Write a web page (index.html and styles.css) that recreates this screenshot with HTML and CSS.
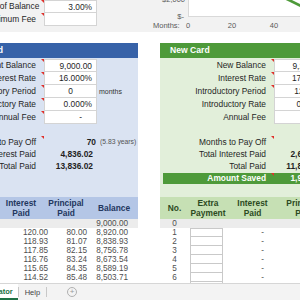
FILE: index.html
```html
<!DOCTYPE html>
<html lang="en">
<head>
    <meta charset="UTF-8">
    <title>Balance Transfer Calculator</title>
    <link rel="stylesheet" href="styles.css">
</head>
<body>
<div class="sheet">
    <div class="sheet__inner">
        <div class="top">
            <div class="fee">
                <div class="row">
                    <span class="label note">Transfer Fee % of Balance</span>
                    <span class="cell cell--first">3.00%</span>
                </div>
                <div class="row">
                    <span class="label note">Minimum Fee</span>
                    <span class="cell"></span>
                </div>
            </div>
            <svg class="chart" width="150" height="32" viewBox="0 0 150 32">
                <rect x="38.5" y="-10" width="130" height="26.5" fill="#fff" stroke="#d9d9d9"/>
                <polyline points="128,-5 141,1 153,7" fill="none" stroke="#4e9a3a" stroke-width="2.6"/>
                <text x="35" y="2" text-anchor="end">$2,000</text>
                <text x="34" y="19" text-anchor="end">$-</text>
                <text x="3" y="28">Months:</text>
                <text x="38" y="28" text-anchor="middle">0</text>
                <text x="82" y="28" text-anchor="middle">20</text>
                <text x="124" y="28" text-anchor="middle">40</text>
            </svg>
        </div>

        <div class="panels">
            <section class="panel panel--current">
                <div class="panel__head">Current Card</div>
                <div class="panel__body">
                    <div class="row">
                        <span class="label note">Current Balance</span>
                        <span class="cell cell--first">9,000.00</span>
                    </div>
                    <div class="row">
                        <span class="label note">Interest Rate</span>
                        <span class="cell">16.000%</span>
                    </div>
                    <div class="row">
                        <span class="label note">Introductory Period</span>
                        <span class="cell cell--center">0</span>
                        <span class="unit">months</span>
                    </div>
                    <div class="row">
                        <span class="label note">Introductory Rate</span>
                        <span class="cell">0.000%</span>
                    </div>
                    <div class="row">
                        <span class="label note">Annual Fee</span>
                        <span class="cell cell--dash">-</span>
                    </div>

                    <div class="results">
                        <div class="row">
                            <span class="label note">Months to Pay Off</span>
                            <span class="value value--count">70</span>
                            <span class="years">(5.83 years)</span>
                        </div>
                        <div class="row">
                            <span class="label">Total Interest Paid</span>
                            <span class="value">4,836.02</span>
                        </div>
                        <div class="row">
                            <span class="label">Total Paid</span>
                            <span class="value">13,836.02</span>
                        </div>
                    </div>
                </div>

                <div class="grid grid--current">
                    <div class="th">Payment</div>
                    <div class="th">Interest<br>Paid</div>
                    <div class="th th--principal">Principal<br>Paid</div>
                    <div class="th">Balance</div>

                    <div class="td zero"></div><div class="td zero"></div><div class="td zero"></div><div class="td zero td--bal">9,000.00</div>

                    <div class="td">200.00</div><div class="td td--int">120.00</div><div class="td td--prin">80.00</div><div class="td td--bal">8,920.00</div>
                    <div class="td">200.00</div><div class="td td--int">118.93</div><div class="td td--prin">81.07</div><div class="td td--bal">8,838.93</div>
                    <div class="td">200.00</div><div class="td td--int">117.85</div><div class="td td--prin">82.15</div><div class="td td--bal">8,756.78</div>
                    <div class="td">200.00</div><div class="td td--int">116.76</div><div class="td td--prin">83.24</div><div class="td td--bal">8,673.54</div>
                    <div class="td">200.00</div><div class="td td--int">115.65</div><div class="td td--prin">84.35</div><div class="td td--bal">8,589.19</div>
                    <div class="td">200.00</div><div class="td td--int">114.52</div><div class="td td--prin">85.48</div><div class="td td--bal">8,503.71</div>
                    <div class="td">200.00</div><div class="td td--int">113.38</div><div class="td td--prin">86.62</div><div class="td td--bal">8,417.09</div>
                </div>
            </section>

            <section class="panel panel--new">
                <div class="panel__head">New Card</div>
                <div class="panel__body">
                    <div class="row">
                        <span class="label note">New Balance</span>
                        <span class="cell cell--first">9,270.00</span>
                    </div>
                    <div class="row">
                        <span class="label note">Interest Rate</span>
                        <span class="cell">17.000%</span>
                    </div>
                    <div class="row">
                        <span class="label note">Introductory Period</span>
                        <span class="cell cell--center">12</span>
                    </div>
                    <div class="row">
                        <span class="label">Introductory Rate</span>
                        <span class="cell">0.000%</span>
                    </div>
                    <div class="row">
                        <span class="label">Annual Fee</span>
                        <span class="cell cell--dash">-</span>
                    </div>

                    <div class="results">
                        <div class="row">
                            <span class="label note">Months to Pay Off</span>
                            <span class="value value--count">62</span>
                        </div>
                        <div class="row">
                            <span class="label">Total Interest Paid</span>
                            <span class="value">2,617.85</span>
                        </div>
                        <div class="row">
                            <span class="label">Total Paid</span>
                            <span class="value">11,887.85</span>
                        </div>
                        <div class="row row--saved">
                            <span class="label note">Amount Saved</span>
                            <span class="value">1,948.17</span>
                        </div>
                    </div>
                </div>

                <div class="grid grid--new">
                    <div class="th">No.</div>
                    <div class="th">Extra<br>Payment</div>
                    <div class="th">Interest<br>Paid</div>
                    <div class="th">Principal<br>Paid</div>
                    <div class="th">Balance</div>

                    <div class="td zero td--no">0</div><div class="td zero"></div><div class="td zero"></div><div class="td zero"></div><div class="td zero"></div>

                    <div class="td td--no">1</div><div class="td"><span class="box box--first"></span></div><div class="td td--dash">-</div><div class="td td--dash">-</div><div class="td"></div>
                    <div class="td td--no">2</div><div class="td"><span class="box"></span></div><div class="td td--dash">-</div><div class="td td--dash">-</div><div class="td"></div>
                    <div class="td td--no">3</div><div class="td"><span class="box"></span></div><div class="td td--dash">-</div><div class="td td--dash">-</div><div class="td"></div>
                    <div class="td td--no">4</div><div class="td"><span class="box"></span></div><div class="td td--dash">-</div><div class="td td--dash">-</div><div class="td"></div>
                    <div class="td td--no">5</div><div class="td"><span class="box"></span></div><div class="td td--dash">-</div><div class="td td--dash">-</div><div class="td"></div>
                    <div class="td td--no">6</div><div class="td"><span class="box"></span></div><div class="td td--dash">-</div><div class="td td--dash">-</div><div class="td"></div>
                    <div class="td td--no">7</div><div class="td"><span class="box"></span></div><div class="td td--dash">-</div><div class="td td--dash">-</div><div class="td"></div>
                </div>
            </section>
        </div>
    </div>
</div>

<div class="tabs">
    <div class="tab tab--active">Calculator</div>
    <div class="tab-sep"></div>
    <div class="tab">Help</div>
    <div class="tab-sep"></div>
    <div class="tab-add">+</div>
</div>
</body>
</html>
```

FILE: styles.css
```css
* {
    box-sizing: border-box;
}

body {
    margin: 0;
    width: 300px;
    height: 300px;
    overflow: hidden;
    display: flex;
    flex-direction: column;
    background: #fff;
    color: #1f1f1f;
    font-family: "Liberation Sans", Arial, sans-serif;
    font-size: 8.4px;
}

/* the visible part of the worksheet */
.sheet {
    flex: none;
    height: 283px;
    overflow: hidden;
}

.sheet__inner {
    width: 420px;
    margin-left: -60px;
}

.top {
    display: flex;
    height: 32px;
    background: #f2f2f2;
}

.fee {
    width: 210px;
}

.chart {
    display: block;
    flex: none;
}

.chart text {
    font-family: "Liberation Sans", Arial, sans-serif;
    font-size: 7.5px;
    fill: #595959;
}

/* label + input rows */
.row {
    display: flex;
    height: 13px;
}

.label {
    position: relative;
    flex: none;
    width: 96px;
    margin-right: 8px;
    line-height: 13px;
    text-align: right;
    white-space: nowrap;
}

.note::after {
    content: "";
    position: absolute;
    top: 0;
    right: -8px;
    border-top: 3px solid #e0302a;
    border-left: 3px solid transparent;
}

.cell {
    flex: none;
    display: flex;
    align-items: center;
    justify-content: flex-end;
    width: 53px;
    padding-right: 4px;
    background: #fff;
    border: 1px solid #d4d4d4;
    border-top: 0;
    white-space: nowrap;
}

.cell--first {
    border-top: 1px solid #d4d4d4;
}

.cell--center {
    justify-content: center;
    padding-right: 0;
}

.cell--dash {
    padding-right: 14px;
}

.panel--new .cell {
    padding-right: 1px;
}

.panel--new .cell--center {
    padding-right: 3px;
}

.unit {
    margin-left: 2px;
    line-height: 13px;
    font-size: 7px;
    color: #333;
}

.panels {
    display: flex;
    gap: 22px;
    margin-top: 11px;
}

.panel--current {
    width: 198px;
}

.panel--new {
    width: 200px;
    overflow: hidden;
}

.panel--new .label {
    width: 106px;
}

.panel__head {
    height: 15px;
    padding-left: 10px;
    line-height: 15px;
    color: #fff;
    font-size: 8.6px;
    font-weight: bold;
}

.panel--current .panel__head {
    background: #3762a8;
}

.panel--new .panel__head {
    background: #4e9a3a;
}

.panel__body {
    height: 139px;
    padding-top: 1px;
}

.panel--current .panel__body {
    background: #dae3f2;
}

.panel--new .panel__body {
    background: #e2efda;
}

.results {
    margin-top: 12px;
}

.results .row {
    height: 12px;
}

.results .label {
    line-height: 12px;
}

.value {
    flex: none;
    width: 53px;
    padding-right: 4px;
    line-height: 12px;
    text-align: right;
    font-weight: bold;
    white-space: nowrap;
}

.value--count {
    padding-right: 1px;
}

.years {
    margin-left: 3px;
    line-height: 12px;
    font-size: 6.8px;
    color: #555;
    white-space: nowrap;
}

.results .row--saved {
    height: 11px;
    margin-top: 1px;
    margin-left: 3px;
    background: #4e9a3a;
    color: #fff;
    font-weight: bold;
}

.panel--new .row--saved .label {
    width: 103px;
    line-height: 11px;
}

.row--saved .value {
    line-height: 11px;
}

/* amortization tables */
.grid {
    display: grid;
    grid-template-rows: 22px;
    grid-auto-rows: 9px;
}

.grid--current {
    grid-template-columns: 52px 58px 40px 48px;
}

.grid--new {
    grid-template-columns: 29px 38px 51px 52px 50px;
}

.th {
    display: flex;
    align-items: center;
    justify-content: center;
    line-height: 10px;
    text-align: center;
    font-weight: bold;
}

.grid--current .th {
    background: #b4c6e6;
    color: #23375e;
}

.grid--new .th {
    background: #c6e0b4;
    color: #2c4a22;
}

.th--principal {
    padding-right: 8px;
}

.td {
    line-height: 9px;
    padding-right: 2px;
    text-align: right;
    color: #4f4f4f;
    font-size: 8.2px;
    white-space: nowrap;
}

.td.zero {
    background: #ececec;
}

.td--prin {
    padding-right: 3px;
}

.td--bal {
    padding-right: 10px;
}

.td--no {
    padding-right: 0;
    text-align: center;
}

.td--dash {
    padding-right: 14px;
}

.box {
    display: block;
    height: 9px;
    margin: 0 2px 0 1px;
    background: #fff;
    border: 1px solid #c9c9c9;
    border-top: 0;
}

.box--first {
    border-top: 1px solid #c9c9c9;
}

/* sheet tabs */
.tabs {
    flex: none;
    display: flex;
    height: 17px;
    margin-left: -29px;
    background: #f3f3f3;
    border-top: 1px solid #d6d6d6;
    font-size: 7.5px;
}

.tab {
    display: flex;
    align-items: center;
    padding: 0 6px;
    color: #444;
}

.tab--active {
    padding: 0 5px;
    background: #fff;
    color: #1e7145;
    font-weight: bold;
    border-bottom: 2px solid #1e7145;
}

.tab-sep {
    width: 1px;
    margin: 3px 0;
    background: #c8c8c8;
}

.tab-add {
    align-self: center;
    width: 10px;
    height: 10px;
    margin-left: 20px;
    border: 1px solid #b0b0b0;
    border-radius: 50%;
    line-height: 8px;
    text-align: center;
    color: #9a9a9a;
    font-size: 8px;
}
```
